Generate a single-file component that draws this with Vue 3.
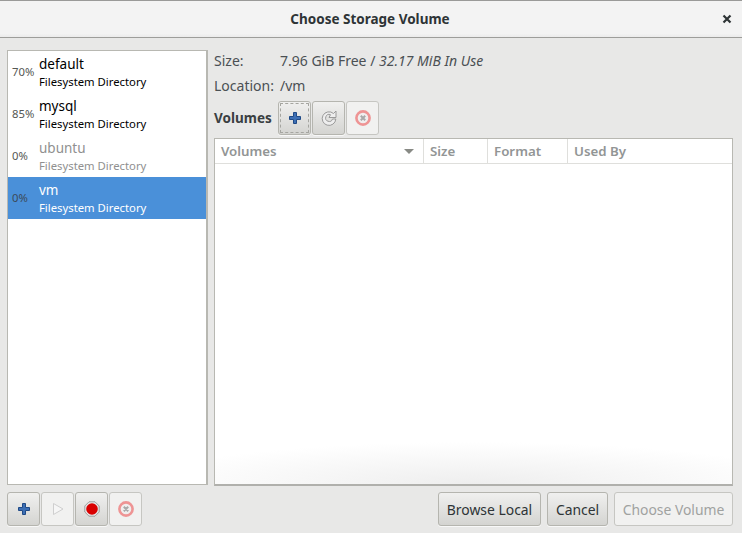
<script setup>
const pools = [
  { pct: '70%', name: 'default', type: 'Filesystem Directory' },
  { pct: '85%', name: 'mysql', type: 'Filesystem Directory' },
  { pct: '0%', name: 'ubuntu', type: 'Filesystem Directory', off: true },
  { pct: '0%', name: 'vm', type: 'Filesystem Directory', sel: true },
]
</script>

<template>
  <div class="dialog">
    <header class="titlebar">
      <span class="title">Choose Storage Volume</span>
      <svg class="close" width="10" height="10" viewBox="0 0 10 10"><path d="M1.500 1.500l7 7M8.500 1.500l-7 7" stroke="#2e3436" stroke-width="2.200" fill="none"/></svg>
    </header>
    <main class="body">
      <div class="left">
        <ul class="pools">
          <li v-for="p in pools" :key="p.name" class="pool" :class="{ off: p.off, sel: p.sel }">
            <span class="pct">{{ p.pct }}</span>
            <span class="info">
              <span class="name">{{ p.name }}</span>
              <span class="type">{{ p.type }}</span>
            </span>
          </li>
        </ul>
        <div class="toolbar">
          <button class="btn icon">
            <svg width="16" height="16" viewBox="0 0 16 16"><path d="M6.500 2.500h3v4h4v3h-4v4h-3v-4h-4v-3h4z" fill="#3d6fb4" stroke="#204a87"/></svg>
          </button>
          <button class="btn icon dis">
            <svg width="16" height="16" viewBox="0 0 16 16"><path d="M3.500 2.500v11l9.500-5.500z" fill="#f6f6f6" stroke="#cfcfcf"/></svg>
          </button>
          <button class="btn icon">
            <svg width="16" height="16" viewBox="0 0 16 16"><path d="M5 .8h6L15.200 5v6L11 15.200H5L.8 11V5z" fill="#e8e8e8" stroke="#8a8a8a" stroke-width=".8"/><circle cx="8" cy="8" r="5.800" fill="#d90000"/></svg>
          </button>
          <button class="btn icon dis">
            <svg width="16" height="16" viewBox="0 0 16 16"><circle cx="8" cy="8" r="6.600" fill="#f0eeee" stroke="#ee9494" stroke-width="2.600"/><path d="M5.800 5.800l4.400 4.400M10.200 5.800l-4.400 4.400" stroke="#a9a9a9" stroke-width="2"/></svg>
          </button>
        </div>
      </div>
      <div class="right">
        <div class="meta">
          <span class="key">Size:</span>
          <span>7.96 GiB Free / <em>32.17 MiB In Use</em></span>
        </div>
        <div class="meta">
          <span class="key">Location:</span>
          <span>/vm</span>
        </div>
        <div class="volbar">
          <strong>Volumes</strong>
          <div class="toolbar">
            <button class="btn icon focus">
              <svg width="16" height="16" viewBox="0 0 16 16"><path d="M6.500 2.500h3v4h4v3h-4v4h-3v-4h-4v-3h4z" fill="#3d6fb4" stroke="#204a87"/></svg>
            </button>
            <button class="btn icon">
              <svg width="16" height="16" viewBox="0 0 16 16"><path d="M12.500 3.500A6.800 6.800 0 1 0 14.800 9h-3.300A3.500 3.500 0 1 1 9.500 4.700L8 7.500h7V1z" fill="#eeeeee" stroke="#9a9a9a"/></svg>
            </button>
            <button class="btn icon dis">
              <svg width="16" height="16" viewBox="0 0 16 16"><circle cx="8" cy="8" r="6.600" fill="#f0eeee" stroke="#ee9494" stroke-width="2.600"/><path d="M5.800 5.800l4.400 4.400M10.200 5.800l-4.400 4.400" stroke="#a9a9a9" stroke-width="2"/></svg>
            </button>
          </div>
        </div>
        <div class="table">
          <div class="thead">
            <div class="th c1">Volumes<span class="arrow"></span></div>
            <div class="th c2">Size</div>
            <div class="th c3">Format</div>
            <div class="th c4">Used By</div>
          </div>
          <div class="tbody"><div class="glow"></div></div>
        </div>
        <div class="actions">
          <button class="btn text browse">Browse Local</button>
          <button class="btn text cancel">Cancel</button>
          <button class="btn text choose dis">Choose Volume</button>
        </div>
      </div>
    </main>
  </div>
</template>

<style scoped>
.dialog {
  width: 742px;
  height: 533px;
  display: flex;
  flex-direction: column;
  background: #e8e8e7;
  color: #2e3436;
  font-family: "Noto Sans", "Open Sans", sans-serif;
  font-size: 14px;
  overflow: hidden;
}
.titlebar {
  box-sizing: border-box;
  height: 38px;
  flex: none;
  display: flex;
  align-items: center;
  justify-content: center;
  position: relative;
  padding-right: 2px;
  background: linear-gradient(#f3f3f3, #f3f3f3 90%, #ebebeb);
  border-top: 1px solid #9a9a98;
  border-bottom: 1px solid #9d9d9a;
}
.title {
  font-weight: 700;
  font-size: 13.500px;
  color: #2e3436;
}
.close { position: absolute; right: 10px; top: 13px; }
.body {
  flex: 1;
  display: flex;
  gap: 6px;
  padding: 10px 9px 7px 7px;
  min-height: 0;
}
.left {
  width: 201px;
  padding-top: 2px;
  display: flex;
  flex-direction: column;
  gap: 7px;
  flex: none;
}
.pools {
  flex: 1;
  margin: 0;
  padding: 0;
  list-style: none;
  background: #fff;
  border: 1px solid #b8b8b2;
  border-right-width: 2px;
}
.pool {
  height: 42px;
  display: flex;
  align-items: center;
}
.pct {
  width: 31px;
  padding-left: 4px;
  padding-bottom: 2px;
  box-sizing: border-box;
  font-size: 11.300px;
  color: #555753;
  flex: none;
}
.info { display: flex; flex-direction: column; padding-top: 2px; }
.name { font-size: 13.500px; line-height: 18px; color: #000; }
.type { font-size: 11.300px; line-height: 18px; color: #000; }
.off .name, .off .type { color: #909090; }
.sel { background: #4a90d9; }
.sel .name, .sel .type { color: #fff; }
.sel .pct { color: #3c4a58; }
.toolbar { display: flex; gap: 1px; }
.btn {
  box-sizing: border-box;
  height: 34px;
  border: 1px solid #b5b5af;
  border-radius: 3px;
  background: linear-gradient(#f0f0ef, #d4d4d1);
  box-shadow: 0 1px 0 rgba(255,255,255,.7);
  padding: 0;
  margin: 0;
  display: flex;
  align-items: center;
  justify-content: center;
  font: inherit;
  color: #2e3436;
}
.btn.icon { width: 33px; }
.btn.dis {
  background: #f1f1f0;
  border-color: #c6c6c2;
  color: #a0a2a0;
  box-shadow: none;
}
.btn.focus { outline: 1px dashed #a5a5a0; outline-offset: -3px; }
.btn.text { font-size: 13.900px; }
.browse { width: 103px; }
.cancel { width: 61px; }
.choose { width: 119px; }
.right { flex: 1; min-width: 0; display: flex; flex-direction: column; }
.meta {
  display: flex;
  height: 25px;
  padding-bottom: 1px;
  box-sizing: border-box;
  align-items: center;
  font-size: 14px;
  color: #4b5054;
}
.meta em { font-style: italic; }
.key { width: 66px; flex: none; }
.volbar {
  height: 34px;
  margin-top: 3px;
  display: flex;
  align-items: center;
  gap: 6px;
}
.volbar strong { width: 58px; font-size: 13.500px; font-weight: 700; color: #3a3f42; }
.table {
  flex: 1;
  margin-top: 3px;
  display: flex;
  flex-direction: column;
  background: #fff;
  border: 1px solid #b8b8b2;
  border-bottom: 2px solid #b0b0ac;
}
.thead {
  height: 25px;
  flex: none;
  display: flex;
  border-bottom: 1px solid #dfdfdc;
  box-sizing: border-box;
}
.th {
  box-sizing: border-box;
  padding-left: 6px;
  display: flex;
  align-items: center;
  font-size: 13.300px;
  font-weight: 600;
  color: #929595;
  border-right: 1px solid #dfdfdc;
}
.c1 { width: 209px; position: relative; }
.c2 { width: 64px; }
.c3 { width: 80px; }
.c4 { flex: 1; border-right: 0; }
.arrow {
  position: absolute;
  right: 9px;
  top: 10px;
  border-left: 5px solid transparent;
  border-right: 5px solid transparent;
  border-top: 5px solid #888a85;
}
.tbody { flex: 1; position: relative; overflow: hidden; }
.glow {
  position: absolute;
  left: 0;
  right: 0;
  bottom: 0;
  height: 42px;
  background: radial-gradient(ellipse 65% 100% at 50% 100%, #eeeeee, rgba(255,255,255,0));
}
.actions {
  display: flex;
  justify-content: flex-end;
  gap: 6px;
  margin-top: 6px;
}
</style>

<style>
body { margin: 0; }
</style>
